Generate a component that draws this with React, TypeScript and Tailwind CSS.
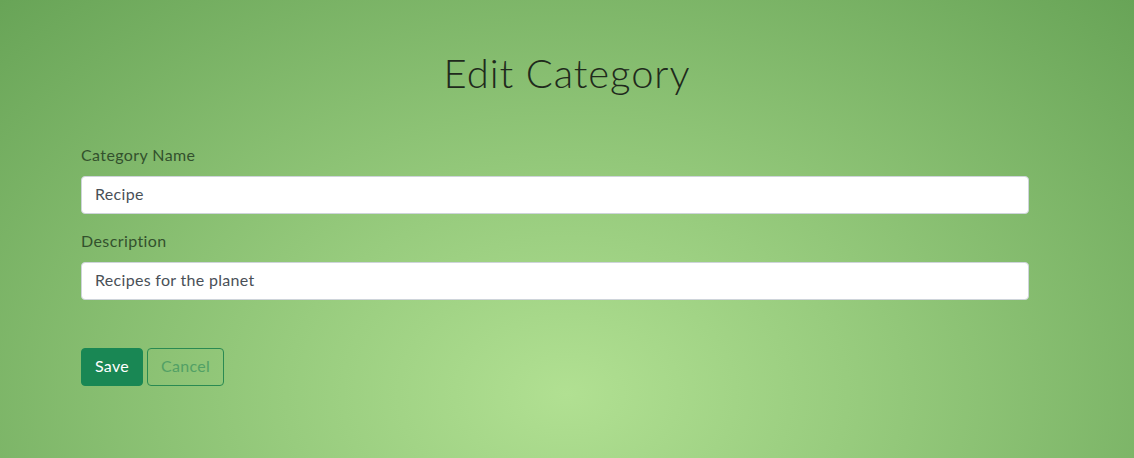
export default function App() {
  return (
    <div
      className="w-full h-[458px] overflow-hidden bg-[radial-gradient(ellipse_at_50%_86%,#b1e092_0%,#98cc7e_35%,#68a457_100%)]"
      style={{ fontFamily: "Lato, 'Open Sans', sans-serif" }}
    >
      <div className="pt-[49px]">
        <h1 className="text-center text-[40px] leading-[48px] font-light text-[#1f2a1c] tracking-[0.9px]">
          Edit Category
        </h1>
        <form className="ml-[81px] w-[948px] mt-[47px]" onSubmit={(e) => e.preventDefault()}>
          <div className="mb-4">
            <label className="block mb-2 text-[16px] leading-6 text-[#33512d] tracking-[0.4px] -translate-y-[1px]">
              Category Name
            </label>
            <input
              className="block w-full h-[38px] px-[13px] pb-[3px] rounded-[4px] border border-[#ced4da] bg-white text-[16px] text-[#495057] outline-none tracking-[0.3px]"
              defaultValue="Recipe"
            />
          </div>
          <div className="mb-4">
            <label className="block mb-2 text-[16px] leading-6 text-[#33512d] tracking-[0.4px] -translate-y-[1px]">
              Description
            </label>
            <input
              className="block w-full h-[38px] px-[13px] pb-[3px] rounded-[4px] border border-[#ced4da] bg-white text-[16px] text-[#495057] outline-none tracking-[0.3px]"
              defaultValue="Recipes for the planet"
            />
          </div>
          <div className="flex gap-1 pt-8">
            <button
              type="submit"
              className="h-[38px] w-[62px] pb-[2px] rounded-[4px] border border-[#198754] bg-[#198754] text-white text-[16px] tracking-[0.3px]"
            >
              Save
            </button>
            <button
              type="button"
              className="h-[38px] w-[77px] pb-[2px] rounded-[4px] border border-[#2a8a52] bg-transparent text-[#52a065] text-[16px] tracking-[0.3px]"
            >
              Cancel
            </button>
          </div>
        </form>
      </div>
    </div>
  );
}
